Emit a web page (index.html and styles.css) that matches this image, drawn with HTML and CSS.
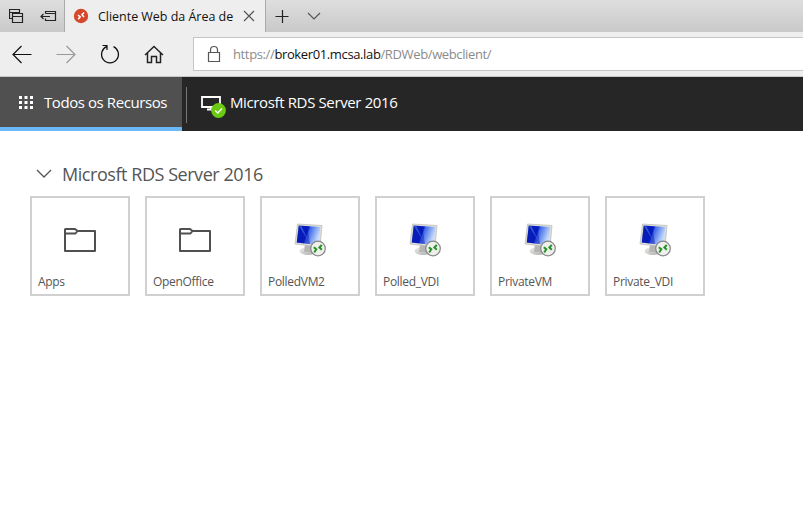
FILE: index.html
```html
<!DOCTYPE html>
<html lang="pt">
<head>
<meta charset="utf-8">
<title>Cliente Web da Área de Trabalho Remota</title>
<link rel="stylesheet" href="styles.css">
</head>
<body>
<svg class="defs" aria-hidden="true">
  <defs>
    <linearGradient id="screen" x1="0" y1="0" x2="1" y2="0.3">
      <stop offset="0" stop-color="#0a2ab8"/><stop offset=".5" stop-color="#0820cf"/><stop offset=".56" stop-color="#3e68e6"/><stop offset="1" stop-color="#c4dafc"/>
    </linearGradient>
    <linearGradient id="stand" x1="0" y1="0" x2="1" y2="1">
      <stop offset="0" stop-color="#f1f1ef"/><stop offset="1" stop-color="#a8a8a6"/>
    </linearGradient>
    <symbol id="folder" viewBox="0 0 34 26">
      <path d="M2 24V2.500Q2 2 2.500 2H12l2.500 2H32v20Z M2 6.500h10.500L14.500 4" fill="none" stroke="#505050" stroke-width="2" stroke-linejoin="round"/>
    </symbol>
    <symbol id="desktop" viewBox="0 0 32 34">
      <ellipse cx="14" cy="28" rx="8.500" ry="4" fill="url(#stand)"/>
      <path d="M11 21l7 2-1 6H10Z" fill="#b5b5b3"/>
      <path d="M3.500 1l24.500 1.500-2 21.500L1 21Z" fill="#dfdfd9" stroke="#b8b8b3" stroke-width=".7"/>
      <path d="M4.700 2.500l21.700 1.500-1.700 18.300L2.700 19.500Z" fill="url(#screen)"/>
      <path d="M4.900 3l8.500.7L16 21 2.900 19.400Z" fill="#0512a6" opacity=".4"/>
      <path d="M5 3l2.500.3 7 15Z" fill="#5487f4" opacity=".55"/>
      <circle cx="24" cy="25.500" r="7.300" fill="#efefec" stroke="#858585" stroke-width="1.200"/>
      <path d="M19.800 24.300l2.500 2-2.100 3.200M27.800 22l-2.400 2.500 2.400 2.200" fill="none" stroke="#279225" stroke-width="2"/>
    </symbol>
  </defs>
</svg>
<header class="tabstrip">
  <div class="tab-tools">
    <svg width="16" height="16" viewBox="0 0 16 16"><path d="M3.500 5.500h10v9h-10Z M3.500 8.500h10M3.500 10.500h-3V1.500h10v4M.5 4.500h10" class="line dark"/></svg>
    <svg width="18" height="16" viewBox="0 0 18 16"><path d="M5.500 5.500V3.500h10v9h-10V10.500M5.500 5.500h10M1 8.500h9M3.500 6l-2.500 2.500 2.500 2.500" class="line dark"/></svg>
  </div>
  <div class="tab">
    <svg class="favicon" width="16" height="16" viewBox="0 0 16 16"><circle cx="8" cy="8" r="7.200" fill="#d5482b"/><path d="M5 7l2.200 1.800-2 2.500M11 4.500L9 6.800l2 2.200" fill="none" stroke="#fff" stroke-width="1.500"/></svg>
    <span class="tab-title">Cliente Web da Área de</span>
    <svg class="close" width="12" height="12" viewBox="0 0 12 12"><path d="M1 1l10 10M11 1L1 11" class="line gray"/></svg>
  </div>
  <svg class="plus" width="14" height="14" viewBox="0 0 14 14"><path d="M.5 7.500h13M7.500 1v13" class="line dark"/></svg>
  <svg class="chevron" width="14" height="8" viewBox="0 0 14 8"><path d="M1 1l6 6 6-6" class="line gray"/></svg>
</header>
<nav class="toolbar">
  <svg width="20" height="20" viewBox="0 0 20 20"><path d="M19.500 10.500H1M9.500 2L1 10.500 9.500 19" class="line black"/></svg>
  <svg width="20" height="20" viewBox="0 0 20 20"><path d="M.5 10.500H19M10.500 2l8.500 8.500-8.500 8.500" class="line pale"/></svg>
  <svg width="20" height="20" viewBox="0 0 20 20"><path d="M13.500 2.600A8.500 8.500 0 1 1 6.500 2.600M2.500 1.500H7V6" class="line black"/></svg>
  <svg width="20" height="20" viewBox="0 0 20 20"><path d="M1 11l9-8.500 9 8.500M3.500 9v9.500h4v-6h5v6h4V9" class="line home"/></svg>
  <div class="address">
    <svg class="lock" width="14" height="18" viewBox="0 0 14 18"><path d="M1.500 7.500h11v9h-11ZM3.500 7V5Q3.500 1.500 7 1.500T10.500 5v2" class="line gray"/></svg>
    <span class="url">https://<b>broker01.mcsa.lab</b>/RDWeb/webclient/</span>
  </div>
</nav>
<div class="appbar">
  <div class="all">
    <svg width="15" height="14" viewBox="0 0 15 14"><path d="M0 0h3v3H0zM5.500 0h3v3h-3zM11 0h3v3h-3zM0 5h3v3H0zM5.500 5h3v3h-3zM11 5h3v3h-3zM0 10h3v3H0zM5.500 10h3v3h-3zM11 10h3v3h-3z" fill="#fff"/></svg>
    <span class="all-label">Todos os Recursos</span>
  </div>
  <div class="divider"></div>
  <svg class="server" width="28" height="24" viewBox="0 0 28 24"><path d="M2 2h18v10H2ZM7 14.500h9M11 12v2" fill="none" stroke="#fff" stroke-width="1.800"/><circle cx="18.500" cy="15.500" r="7.400" fill="#6bc813"/><path d="M15.200 15.500l2.500 2.500 4.300-4.500" fill="none" stroke="#fff" stroke-width="1.300"/></svg>
  <span class="server-label">Microsft RDS Server 2016</span>
</div>
<main>
  <h1><svg width="16" height="10" viewBox="0 0 16 10"><path d="M1 1l7 7 7-7" fill="none" stroke="#555" stroke-width="1.300"/></svg><span class="heading">Microsft RDS Server 2016</span></h1>
  <div class="cards">
    <div class="card"><svg class="folder"><use href="#folder"/></svg><span class="name">Apps</span></div>
    <div class="card"><svg class="folder"><use href="#folder"/></svg><span class="name">OpenOffice</span></div>
    <div class="card"><svg class="desktop"><use href="#desktop"/></svg><span class="name">PolledVM2</span></div>
    <div class="card"><svg class="desktop"><use href="#desktop"/></svg><span class="name">Polled_VDI</span></div>
    <div class="card"><svg class="desktop"><use href="#desktop"/></svg><span class="name">PrivateVM</span></div>
    <div class="card"><svg class="desktop"><use href="#desktop"/></svg><span class="name">Private_VDI</span></div>
  </div>
</main>
</body>
</html>
```
FILE: styles.css
```css
* { box-sizing: border-box; }
body { margin: 0; height: 514px; overflow: hidden; background: #fff; font-family: "Open Sans", "Noto Sans", sans-serif; white-space: nowrap; }
svg { display: block; flex: none; }
.defs { position: absolute; width: 0; height: 0; }
.line { fill: none; stroke-width: 1.2; }
.dark { stroke: #222; }
.black { stroke: #111; stroke-width: 1.2; }
.gray { stroke: #555; }
.pale { stroke: #999; }
.home { stroke: #222; stroke-width: 1.5; }
.tabstrip { display: flex; align-items: center; height: 32px; background: linear-gradient(#dedede, #c9c9c9); }
.tab-tools { display: flex; gap: 15px; width: 65px; height: 32px; padding: 8px 0 0 9px; border-right: 1px solid #aaa; }
.tab { display: flex; align-items: center; width: 201px; height: 32px; padding-left: 8px; background: #eee; border-right: 1px solid #aaa; }
.tab-title { width: 137px; margin-left: 9px; font-size: 12.5px; color: #111; letter-spacing: -.03px; }
.close { margin-left: 8px; }
.plus { margin-left: 9px; }
.chevron { margin-left: 18px; }
.toolbar { display: flex; align-items: center; gap: 24px; height: 45px; padding-left: 12px; background: #eee; border-bottom: 1px solid #c8c8c8; }
.address { display: flex; flex: 1; align-items: center; height: 34px; margin-left: 5px; padding-left: 13px; background: #fff; border: 1px solid #c6c6c6; border-right: 0; }
.url { margin-left: 12px; font-size: 13px; color: #8b8b8b; letter-spacing: -.37px; }
.url b { color: #111; font-weight: 400; }
.appbar { display: flex; height: 54px; background: #262626; color: #fff; }
.all { display: flex; width: 182px; padding: 19px 0 0 19px; background: #505050; border-bottom: 4px solid #6cb8f6; }
.all-label { margin: -6px 0 0 10px; font-size: 15px; line-height: 24px; letter-spacing: -.42px; }
.divider { width: 1px; height: 36px; margin: 10px 0 0 4px; background: #777; }
.server { margin: 18px 0 0 13px; }
.server-label { margin: 13px 0 0 2px; font-size: 15px; line-height: 24px; letter-spacing: -.37px; }
main { padding: 31px 30px; }
h1 { display: flex; align-items: center; height: 24px; margin: 0 0 10px; padding-left: 6px; font-weight: 400; color: #555; }
.heading { margin-left: 10px; font-size: 18px; line-height: 24px; letter-spacing: -.45px; }
.cards { display: flex; gap: 15px; }
.card { display: flex; flex-direction: column; justify-content: space-between; width: 100px; height: 100px; padding: 27px 6px 4px; border: 2px solid #d0d0d0; color: #555; }
.folder { width: 34px; height: 26px; margin: 2px 0 0 25px; }
.desktop { width: 32px; height: 34px; margin: -2px 0 0 26px; }
.name { align-self: flex-start; font-size: 12px; line-height: 16px; letter-spacing: -.3px; }
```
